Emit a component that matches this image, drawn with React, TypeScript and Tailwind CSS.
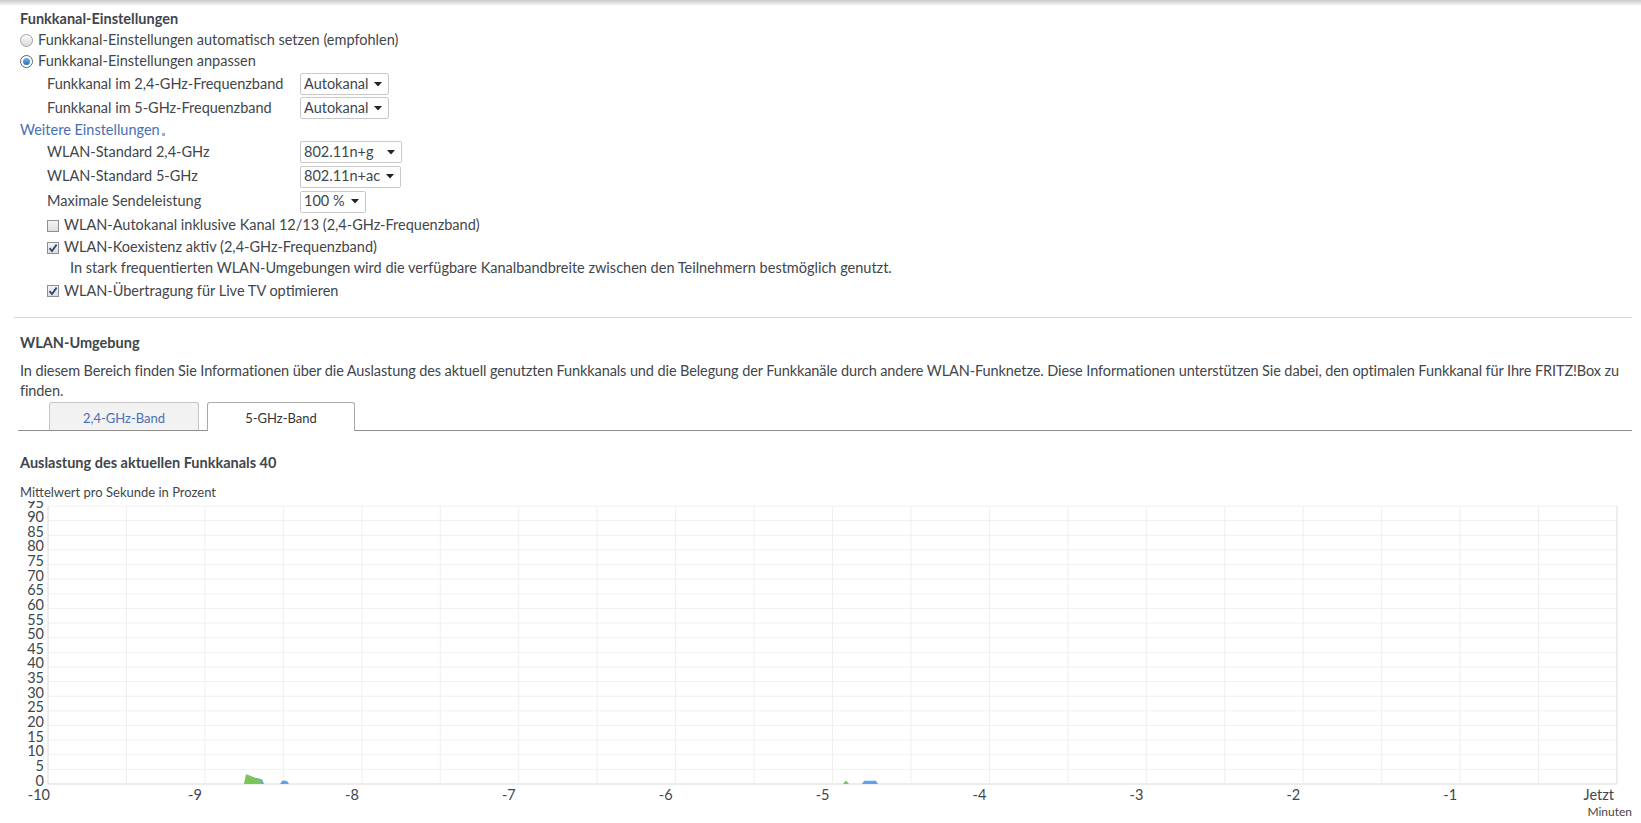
import React from "react";

// FRITZ!Box – WLAN / Funkkanal: Einstellungen und Auslastungsdiagramm

const FONT = "font-['Lato','Noto_Sans',sans-serif]";

function Radio({ checked }: { checked?: boolean }) {
  if (checked) {
    return (
      <span className="flex h-[13px] w-[13px] items-center justify-center rounded-full border border-[#5f6468] bg-white">
        <span className="h-[7px] w-[7px] rounded-full bg-gradient-to-b from-[#6fb3ef] to-[#1f6fc2]" />
      </span>
    );
  }
  return <span className="h-[13px] w-[13px] rounded-full border border-[#a3a3a3] bg-gradient-to-b from-[#fbfbfb] to-[#d9d9d9]" />;
}

function Checkbox({ checked }: { checked?: boolean }) {
  return (
    <span className="flex h-[12px] w-[12px] items-center justify-center border border-[#8f8f8f] bg-gradient-to-b from-[#f4f4f4] to-[#dedede]">
      {checked ? (
        <svg width="10" height="10" viewBox="0 0 10 10">
          <path d="M1.5 5.2 L4 8 L8.6 1.6" fill="none" stroke="#2a4a78" strokeWidth="1.8" />
        </svg>
      ) : null}
    </span>
  );
}

function Select({ value, w }: { value: string; w: string }) {
  return (
    <div className={"flex h-[22px] items-center justify-between gap-[6px] whitespace-nowrap rounded-[2px] border border-[#c9c9c9] bg-white pl-[3px] pr-[6px] " + w}>
      <span>{value}</span>
      <svg width="8" height="5" viewBox="0 0 8 5" className="shrink-0">
        <path d="M0 0 L8 0 L4 4.5 Z" fill="#222" />
      </svg>
    </div>
  );
}

function SelectRow({ label, value, w, h }: { label: string; value: string; w: string; h: string }) {
  return (
    <div className={"flex items-center pl-[27px] " + h}>
      <span className="w-[253px] shrink-0">{label}</span>
      <Select value={value} w={w} />
    </div>
  );
}

function CheckRow({ label, checked, h }: { label: string; checked?: boolean; h: string }) {
  return (
    <div className={"flex items-center gap-[5px] pl-[27px] " + h}>
      <Checkbox checked={checked} />
      <span>{label}</span>
    </div>
  );
}

// Diagramm-Geometrie (Seitenkoordinaten, SVG beginnt bei y=501)
const PL = 48;
const PR = 1617;
const PT = 5;
const PB = 283;
const YSTEP = (PB - PT) / 19;
const XSTEP = (PR - PL) / 20;
const pct = (p: number) => PB - (p / 5) * YSTEP;

const blueAreas: [number, number][][] = [
  [[248, 0], [252, 2.2], [258, 2.0], [262, 1.5], [264, 0]],
  [[280, 0], [282, 1.0], [284, 1.2], [287, 1.0], [289, 0]],
  [[862, 0], [864, 1.1], [876, 1.1], [878, 0]],
];
const greenAreas: [number, number][][] = [
  [[244, 0], [246, 3.3], [249, 3.0], [255, 2.1], [260, 1.5], [262, 0]],
  [[843, 0], [846, 1.2], [849, 0]],
];

function toPoints(a: [number, number][]) {
  return a.map(([x, p]) => x + "," + pct(p)).join(" ");
}

function Chart() {
  const yLabels = Array.from({ length: 20 }, (_, i) => i * 5);
  const vLines = Array.from({ length: 21 }, (_, i) => PL + i * XSTEP);
  const xLabels = ["-10", "-9", "-8", "-7", "-6", "-5", "-4", "-3", "-2", "-1", "Jetzt"];
  return (
    <svg width="1641" height="322" className="block" style={{ fontFamily: "Lato, 'Noto Sans', sans-serif" }}>
      {yLabels.map((v) => (
        <line key={"h" + v} x1={PL} x2={PR} y1={pct(v)} y2={pct(v)} stroke={v === 0 ? "#d9d9d9" : "#f0f0f0"} strokeWidth="1" />
      ))}
      {vLines.map((x, i) => (
        <line key={"v" + i} x1={x} x2={x} y1={PT} y2={PB} stroke={i === 0 || i === 20 ? "#dcdcdc" : "#efefef"} strokeWidth="1" />
      ))}
      {blueAreas.map((a, i) => (
        <polygon key={"b" + i} points={toPoints(a)} fill="#5ba5e6" />
      ))}
      {greenAreas.map((a, i) => (
        <polygon key={"g" + i} points={toPoints(a)} fill="#7cc35a" />
      ))}
      {yLabels.map((v) => (
        <text key={"yl" + v} x={44} y={pct(v) + 1.5} textAnchor="end" fontSize="14.5" fill="#3f464c">
          {v}
        </text>
      ))}
      {xLabels.map((l, i) => (
        <text key={"xl" + l} x={PL + i * 2 * XSTEP + (i === 0 ? 2 : -3)} y={299} textAnchor="end" fontSize="14.5" fill="#3f464c">
          {l}
        </text>
      ))}
      <text x={1632} y={315} textAnchor="end" fontSize="12" fill="#3f464c">
        Minuten
      </text>
    </svg>
  );
}

export default function App() {
  return (
    <div className={"min-h-screen bg-white text-[14.5px] leading-none text-[#3f464c] " + FONT}>
      <div className="h-[6px] bg-gradient-to-b from-[#c9c9c9] to-white" />
      <div className="pl-[14px] pr-[9px] pt-[3px]">
        <div className="pl-[6px]">
          <div className="flex h-[21px] items-center font-bold">Funkkanal-Einstellungen</div>
          <div className="flex h-[21px] items-center gap-[5px]">
            <Radio />
            <span>Funkkanal-Einstellungen automatisch setzen (empfohlen)</span>
          </div>
          <div className="flex h-[21px] items-center gap-[5px]">
            <Radio checked />
            <span>Funkkanal-Einstellungen anpassen</span>
          </div>
          <SelectRow h="h-[24px]" label="Funkkanal im 2,4-GHz-Frequenzband" value="Autokanal" w="min-w-[87px]" />
          <SelectRow h="h-[24px]" label="Funkkanal im 5-GHz-Frequenzband" value="Autokanal" w="min-w-[87px]" />
          <div className="flex h-[20px] items-center text-[#4a6fb3]">
            <span>Weitere Einstellungen</span>
            <span className="ml-[2px] mt-[8px] h-[3px] w-[3px] bg-[#8fb0dc]" />
          </div>
          <SelectRow h="h-[24px]" label="WLAN-Standard 2,4-GHz" value="802.11n+g" w="min-w-[102px]" />
          <SelectRow h="h-[25px]" label="WLAN-Standard 5-GHz" value="802.11n+ac" w="min-w-[93px]" />
          <SelectRow h="h-[25px]" label="Maximale Sendeleistung" value="100 %" w="min-w-[60px]" />
          <CheckRow h="h-[23px]" label="WLAN-Autokanal inklusive Kanal 12/13 (2,4-GHz-Frequenzband)" />
          <CheckRow h="h-[21px]" label="WLAN-Koexistenz aktiv (2,4-GHz-Frequenzband)" checked />
          <div className="flex h-[21px] items-center pl-[50px]">
            In stark frequentierten WLAN-Umgebungen wird die verfügbare Kanalbandbreite zwischen den Teilnehmern bestmöglich genutzt.
          </div>
          <CheckRow h="h-[24px]" label="WLAN-Übertragung für Live TV optimieren" checked />
        </div>

        <div className="mt-[14px] border-t border-[#d6d6d6]" />

        <div className="pl-[6px]">
          <div className="mt-[15px] flex h-[21px] items-center font-bold">WLAN-Umgebung</div>
          <p className="mt-[7px] whitespace-nowrap leading-[20px] tracking-[-0.1px]">
            In diesem Bereich finden Sie Informationen über die Auslastung des aktuell genutzten Funkkanals und die Belegung der Funkkanäle durch andere WLAN-Funknetze. Diese Informationen unterstützen Sie dabei, den optimalen Funkkanal für Ihre FRITZ!Box zu
            <br />
            finden.
          </p>
        </div>

        <div className="ml-[4px] mt-[2px] flex h-[28px] items-end gap-[8px] border-b border-[#8f8f8f] pl-[31px] text-[13px]">
          <div className="flex h-[28px] w-[150px] items-center justify-center rounded-t-[3px] border border-b-0 border-[#c4c4c4] bg-[#f2f2f2] pt-[3px] text-[#4a6fb3]">
            2,4-GHz-Band
          </div>
          <div className="-mb-px flex h-[29px] w-[148px] items-center justify-center rounded-t-[3px] border border-b-0 border-[#a9a9a9] bg-white pt-[3px] text-[#2f3438]">
            5-GHz-Band
          </div>
        </div>

        <div className="pl-[6px]">
          <div className="mt-[22px] flex h-[21px] items-center font-bold">Auslastung des aktuellen Funkkanals 40</div>
          <div className="mt-[9px] flex h-[18px] items-center text-[13px]">Mittelwert pro Sekunde in Prozent</div>
        </div>
      </div>
      <Chart />
    </div>
  );
}
